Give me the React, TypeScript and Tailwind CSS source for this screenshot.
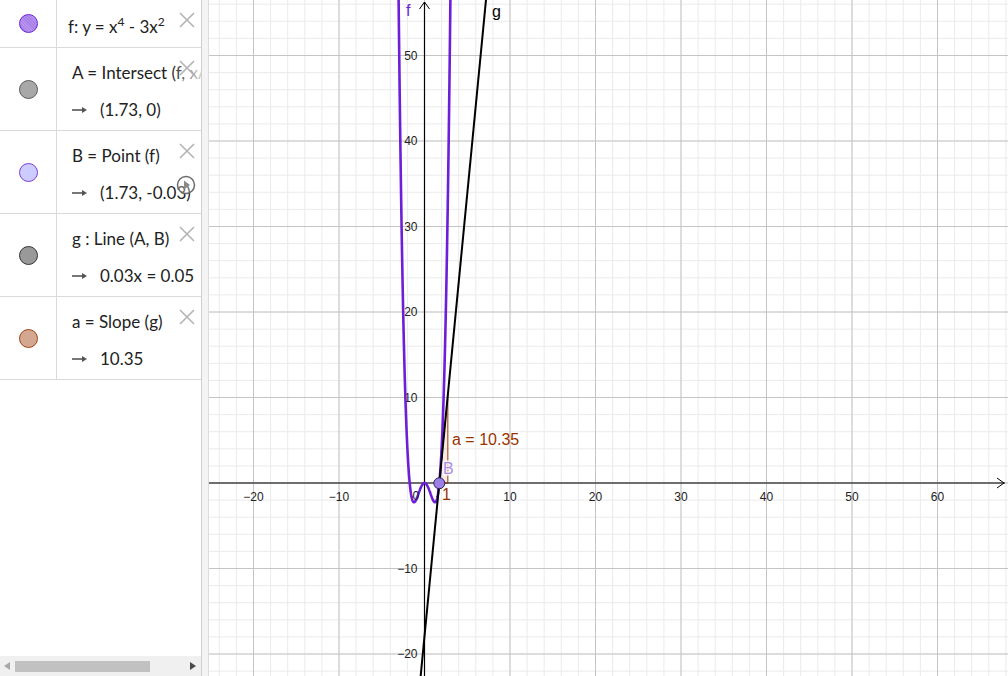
import React from "react";

// graph geometry (local to the graphics view)
const W = 799;
const H = 676;
const OX = 215.5;
const OY = 483;
const S = 8.55;

const px = (x: number) => OX + x * S;
const py = (y: number) => OY - y * S;

const PURPLE = "#6d1ed9";
const BROWN = "#993300";

function CloseIcon() {
    return (
        <svg width="16" height="16" viewBox="0 0 16 16" className="absolute right-[6px] top-[12px]">
            <path d="M1 1 L15 15 M15 1 L1 15" stroke="#b4b4b4" strokeWidth="1.6" fill="none" />
        </svg>
    );
}

function Arrow() {
    return (
        <svg width="16" height="8" viewBox="0 0 16 8" className="mr-[12px] shrink-0">
            <path d="M0 4 H13" stroke="#555" strokeWidth="1.6" />
            <path d="M10 1 L15 4 L10 7 Z" fill="#555" />
        </svg>
    );
}

function Sup({ children }: { children: React.ReactNode }) {
    return <span className="relative -top-[7px] text-[12px]">{children}</span>;
}

type Row = {
    fill: string;
    stroke: string;
    def: React.ReactNode;
    value?: string;
    fade?: boolean;
    play?: boolean;
    hatch?: boolean;
};

const rows: Row[] = [
    {
        fill: "#a67ee8",
        stroke: "#6d1ed9",
        def: (
            <>
                f: y = x<Sup>4</Sup> - 3x<Sup>2</Sup>
            </>
        ),
        hatch: true,
    },
    { fill: "#a8a8a8", stroke: "#5a5a5a", def: <>A = Intersect (f, xAxis)</>, value: "(1.73, 0)", fade: true },
    { fill: "#ccccff", stroke: "#7a3de0", def: <>B = Point (f)</>, value: "(1.73, -0.03)", play: true },
    { fill: "#999999", stroke: "#333333", def: <>g : Line (A, B)</>, value: "0.03x = 0.05" },
    { fill: "#d4a890", stroke: "#a0421a", def: <>a = Slope (g)</>, value: "10.35" },
];

function AlgebraRow({ row }: { row: Row }) {
    const tall = !!row.value;
    return (
        <div className={`relative flex border-b border-[#dadada] ${tall ? "h-[83px]" : "h-[48px]"}`}>
            <div className="flex w-[57px] shrink-0 items-center justify-center border-r border-[#dadada]">
                <div
                    className="h-[19px] w-[19px] rounded-full border"
                    style={{
                        background: row.hatch
                            ? `repeating-linear-gradient(45deg, ${row.fill} 0px, ${row.fill} 1px, #b896f0 1px, #b896f0 2px)`
                            : row.fill,
                        borderColor: row.stroke,
                    }}
                />
            </div>
            <div className={`min-w-0 flex-1 overflow-hidden whitespace-nowrap ${tall ? "pl-[15px] pt-[15px]" : "pl-[11px] pt-[17px]"}`}>
                <div className="relative leading-[20px]">
                    {row.def}
                    {row.fade && (
                        <div className="absolute right-0 top-0 h-[20px] w-[30px] bg-gradient-to-r from-white/0 to-white/80" />
                    )}
                </div>
                {row.value && (
                    <div className="mt-[17px] flex items-center leading-[20px]">
                        <Arrow />
                        {row.value}
                    </div>
                )}
            </div>
            <CloseIcon />
            {row.play && (
                <svg width="20" height="20" viewBox="0 0 20 20" className="absolute left-[176px] top-[44px]">
                    <circle cx="10" cy="10" r="8.5" stroke="#6a6a6a" strokeWidth="1.5" fill="rgba(255,255,255,0.3)" />
                    <path d="M8 5.5 L14 10 L8 14.5 Z" fill="#8a8a8a" />
                </svg>
            )}
        </div>
    );
}

function Graph() {
    const minor: number[] = [];
    for (let v = -26; v <= 70; v += 2) minor.push(v);
    const fPts: string[] = [];
    for (let x = -3.1; x <= 3.1; x += 0.01) {
        const y = x ** 4 - 3 * x ** 2;
        fPts.push(`${px(x).toFixed(2)},${py(Math.min(y, 70)).toFixed(2)}`);
    }
    const ax = 1.732;
    const g = (x: number) => 10.35 * (x - ax);
    const xLabels = [-20, -10, 10, 20, 30, 40, 50, 60];
    const yLabels = [50, 40, 30, 20, 10, -10, -20];
    const fmt = (v: number) => (v < 0 ? `\u2212${-v}` : `${v}`);

    return (
        <svg width={W} height={H} viewBox={`0 0 ${W} ${H}`} className="block">
            {/* minor grid */}
            {minor.map((v) => (
                <g key={`m${v}`}>
                    <line x1={px(v)} y1={0} x2={px(v)} y2={H} stroke="#ebebeb" strokeWidth="1" />
                    <line x1={0} y1={py(v)} x2={W} y2={py(v)} stroke="#ebebeb" strokeWidth="1" />
                </g>
            ))}
            {/* major grid */}
            {minor
                .filter((v) => v % 10 === 0)
                .map((v) => (
                    <g key={`M${v}`}>
                        <line x1={px(v)} y1={0} x2={px(v)} y2={H} stroke="#c4c4c4" strokeWidth="1" />
                        <line x1={0} y1={py(v)} x2={W} y2={py(v)} stroke="#c4c4c4" strokeWidth="1" />
                    </g>
                ))}

            {/* axes */}
            <line x1={0} y1={OY} x2={W - 3} y2={OY} stroke="#000" strokeWidth="1.2" />
            <path d={`M${W - 11} ${OY - 5} L${W - 4} ${OY} L${W - 11} ${OY + 5}`} stroke="#000" fill="none" />
            <line x1={OX} y1={H} x2={OX} y2={2} stroke="#000" strokeWidth="1.2" />
            <path d={`M${OX - 5} 9 L${OX} 2 L${OX + 5} 9`} stroke="#000" fill="none" />

            {/* tick labels */}
            <g fontFamily="'Liberation Sans', Arial, sans-serif" fontSize="12" fill="#222">
                {xLabels.map((v) => (
                    <text key={`x${v}`} x={px(v)} y={OY + 18} textAnchor="middle">
                        {fmt(v)}
                    </text>
                ))}
                {yLabels.map((v) => (
                    <text key={`y${v}`} x={OX - 7} y={py(v) + 4} textAnchor="end">
                        {fmt(v)}
                    </text>
                ))}
            </g>

            {/* slope triangle */}
            <path
                d={`M${px(ax)} ${py(0)} L${px(ax + 1)} ${py(0)} L${px(ax + 1)} ${py(10.35)} Z`}
                fill="rgba(153,51,0,0.1)"
                stroke={BROWN}
                strokeWidth="1"
            />

            {/* f */}
            <polyline points={fPts.join(" ")} fill="none" stroke={PURPLE} strokeWidth="2.6" strokeLinejoin="round" />

            {/* g */}
            <line x1={px(-1)} y1={py(g(-1))} x2={px(8)} y2={py(g(8))} stroke="#000" strokeWidth="2" />

            {/* B */}
            <circle cx={px(1.73)} cy={py(-0.03)} r="5.5" fill="#9c80e6" stroke="#2e2050" strokeWidth="1" />

            {/* labels */}
            <text x={OX - 12} y={OY + 17} fontFamily="'Liberation Sans', Arial, sans-serif" fontSize="12" fill="#222">
                0
            </text>
            <g fontFamily="'Liberation Sans', Arial, sans-serif" fontSize="16">
                <text x={197} y={16} fill={PURPLE}>f</text>
                <text x={283} y={17} fill="#000">g</text>
                <text
                    x={234}
                    y={474}
                    fill="#a98ae8"
                    stroke="#fff"
                    strokeWidth="3"
                    strokeOpacity="0.85"
                    paintOrder="stroke"
                >
                    B
                </text>
                <text x={233} y={500} fill={BROWN}>1</text>
                <text x={243} y={445} fill={BROWN}>a = 10.35</text>
            </g>
        </svg>
    );
}

export default function App() {
    return (
        <div
            className="flex h-[676px] w-[1008px] overflow-hidden bg-white text-[17px] text-[#222]"
            style={{ fontFamily: "Lato, 'Open Sans', sans-serif" }}
        >
            {/* Algebra view */}
            <div className="flex w-[202px] shrink-0 flex-col border-r border-[#cfcfcf]">
                <div className="flex-1 overflow-hidden">
                    {rows.map((r, i) => (
                        <AlgebraRow key={i} row={r} />
                    ))}
                </div>
                <div className="flex h-[20px] items-center bg-[#f0f0f0]">
                    <svg width="6" height="8" viewBox="0 0 6 8" className="ml-[4px]">
                        <path d="M6 0 L0 4 L6 8 Z" fill="#a8a8a8" />
                    </svg>
                    <div className="ml-[5px] h-[11px] w-[135px] bg-[#c1c1c1]" />
                    <div className="flex-1" />
                    <svg width="6" height="8" viewBox="0 0 6 8" className="mr-[5px]">
                        <path d="M0 0 L6 4 L0 8 Z" fill="#4a4a4a" />
                    </svg>
                </div>
            </div>
            {/* splitter */}
            <div className="w-[7px] shrink-0 border-r border-[#dcdcdc] bg-[#f4f4f4]" />
            {/* Graphics view */}
            <div className="flex-1 overflow-hidden">
                <Graph />
            </div>
        </div>
    );
}
